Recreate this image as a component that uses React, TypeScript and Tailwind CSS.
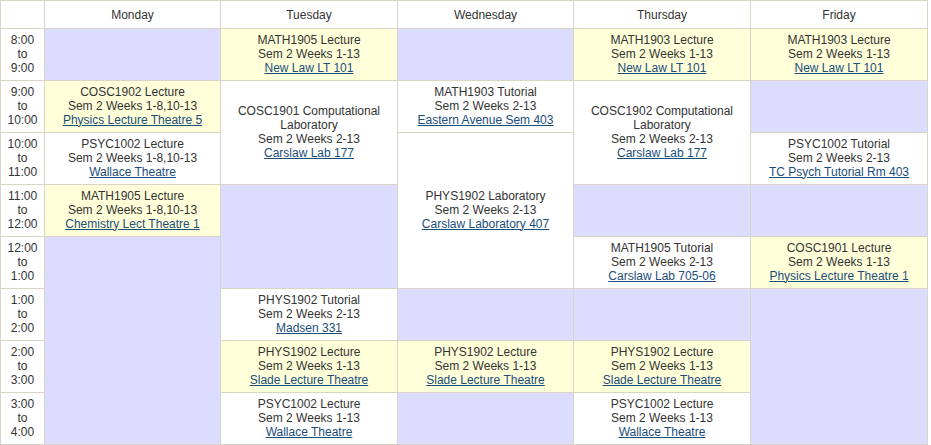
import React from "react";

type Cell = {
  col: string;
  row: string;
  kind: "y" | "w" | "p";
  title?: string;
  weeks?: string;
  room?: string;
};

const cells: Cell[] = [
  // Monday
  { col: "col-start-2", row: "row-start-2", kind: "p" },
  { col: "col-start-2", row: "row-start-3", kind: "y", title: "COSC1902 Lecture", weeks: "Sem 2 Weeks 1-8,10-13", room: "Physics Lecture Theatre 5" },
  { col: "col-start-2", row: "row-start-4", kind: "w", title: "PSYC1002 Lecture", weeks: "Sem 2 Weeks 1-8,10-13", room: "Wallace Theatre" },
  { col: "col-start-2", row: "row-start-5", kind: "y", title: "MATH1905 Lecture", weeks: "Sem 2 Weeks 1-8,10-13", room: "Chemistry Lect Theatre 1" },
  { col: "col-start-2", row: "row-start-6 row-span-4", kind: "p" },
  // Tuesday
  { col: "col-start-3", row: "row-start-2", kind: "y", title: "MATH1905 Lecture", weeks: "Sem 2 Weeks 1-13", room: "New Law LT 101" },
  { col: "col-start-3", row: "row-start-3 row-span-2", kind: "w", title: "COSC1901 Computational Laboratory", weeks: "Sem 2 Weeks 2-13", room: "Carslaw Lab 177" },
  { col: "col-start-3", row: "row-start-5 row-span-2", kind: "p" },
  { col: "col-start-3", row: "row-start-7", kind: "w", title: "PHYS1902 Tutorial", weeks: "Sem 2 Weeks 2-13", room: "Madsen 331" },
  { col: "col-start-3", row: "row-start-8", kind: "y", title: "PHYS1902 Lecture", weeks: "Sem 2 Weeks 1-13", room: "Slade Lecture Theatre" },
  { col: "col-start-3", row: "row-start-9", kind: "w", title: "PSYC1002 Lecture", weeks: "Sem 2 Weeks 1-13", room: "Wallace Theatre" },
  // Wednesday
  { col: "col-start-4", row: "row-start-2", kind: "p" },
  { col: "col-start-4", row: "row-start-3", kind: "w", title: "MATH1903 Tutorial", weeks: "Sem 2 Weeks 2-13", room: "Eastern Avenue Sem 403" },
  { col: "col-start-4", row: "row-start-4 row-span-3", kind: "w", title: "PHYS1902 Laboratory", weeks: "Sem 2 Weeks 2-13", room: "Carslaw Laboratory 407" },
  { col: "col-start-4", row: "row-start-7", kind: "p" },
  { col: "col-start-4", row: "row-start-8", kind: "y", title: "PHYS1902 Lecture", weeks: "Sem 2 Weeks 1-13", room: "Slade Lecture Theatre" },
  { col: "col-start-4", row: "row-start-9", kind: "p" },
  // Thursday
  { col: "col-start-5", row: "row-start-2", kind: "y", title: "MATH1903 Lecture", weeks: "Sem 2 Weeks 1-13", room: "New Law LT 101" },
  { col: "col-start-5", row: "row-start-3 row-span-2", kind: "w", title: "COSC1902 Computational Laboratory", weeks: "Sem 2 Weeks 2-13", room: "Carslaw Lab 177" },
  { col: "col-start-5", row: "row-start-5", kind: "p" },
  { col: "col-start-5", row: "row-start-6", kind: "w", title: "MATH1905 Tutorial", weeks: "Sem 2 Weeks 2-13", room: "Carslaw Lab 705-06" },
  { col: "col-start-5", row: "row-start-7", kind: "p" },
  { col: "col-start-5", row: "row-start-8", kind: "y", title: "PHYS1902 Lecture", weeks: "Sem 2 Weeks 1-13", room: "Slade Lecture Theatre" },
  { col: "col-start-5", row: "row-start-9", kind: "w", title: "PSYC1002 Lecture", weeks: "Sem 2 Weeks 1-13", room: "Wallace Theatre" },
  // Friday
  { col: "col-start-6", row: "row-start-2", kind: "y", title: "MATH1903 Lecture", weeks: "Sem 2 Weeks 1-13", room: "New Law LT 101" },
  { col: "col-start-6", row: "row-start-3", kind: "p" },
  { col: "col-start-6", row: "row-start-4", kind: "w", title: "PSYC1002 Tutorial", weeks: "Sem 2 Weeks 2-13", room: "TC Psych Tutorial Rm 403" },
  { col: "col-start-6", row: "row-start-5", kind: "p" },
  { col: "col-start-6", row: "row-start-6", kind: "y", title: "COSC1901 Lecture", weeks: "Sem 2 Weeks 1-13", room: "Physics Lecture Theatre 1" },
  { col: "col-start-6", row: "row-start-7 row-span-3", kind: "p" },
];

const days = ["Monday", "Tuesday", "Wednesday", "Thursday", "Friday"];
const times = [
  ["8:00", "9:00"],
  ["9:00", "10:00"],
  ["10:00", "11:00"],
  ["11:00", "12:00"],
  ["12:00", "1:00"],
  ["1:00", "2:00"],
  ["2:00", "3:00"],
  ["3:00", "4:00"],
];
const timeRows = [
  "row-start-2",
  "row-start-3",
  "row-start-4",
  "row-start-5",
  "row-start-6",
  "row-start-7",
  "row-start-8",
  "row-start-9",
];
const dayCols = ["col-start-2", "col-start-3", "col-start-4", "col-start-5", "col-start-6"];

export default function App() {
  return (
    <div className="w-[931px] h-[445px] bg-white overflow-hidden" style={{ fontFamily: '"Liberation Sans", Arial, sans-serif' }}>
      <div className="grid w-[928px] grid-cols-[43px_175px_176px_175px_176px_176px] grid-rows-[27px_repeat(8,51px)] gap-px bg-[#d9d5c6] border border-[#d9d5c6] text-[12px] leading-[14px] text-[#333333]">
        <div className="col-start-1 row-start-1 bg-white" />
        {days.map((d, i) => (
          <div key={d} className={`${dayCols[i]} row-start-1 bg-white flex items-center justify-center`}>
            {d}
          </div>
        ))}
        {times.map(([a, b], i) => (
          <div key={a} className={`col-start-1 ${timeRows[i]} bg-white flex flex-col items-center justify-center text-center pb-[2px]`}>
            <span>{a}</span>
            <span>to</span>
            <span>{b}</span>
          </div>
        ))}
        {cells.map((c, i) => (
          <div
            key={i}
            className={`${c.col} ${c.row} ${c.kind === "y" ? "bg-[#ffffda]" : c.kind === "w" ? "bg-white" : "bg-[#dcdcfe]"} flex flex-col items-center justify-center text-center px-[6px] pb-[2px]`}
          >
            {c.title && (
              <>
                <span>{c.title}</span>
                <span>{c.weeks}</span>
                <a href="#" className="text-[#1b4d7a] underline">
                  {c.room}
                </a>
              </>
            )}
          </div>
        ))}
      </div>
    </div>
  );
}
